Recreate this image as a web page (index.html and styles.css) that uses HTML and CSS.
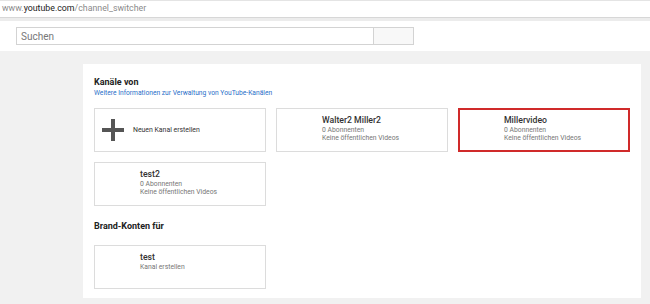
FILE: index.html
```html
<!DOCTYPE html>
<html lang="de">
<head>
<meta charset="utf-8">
<title>YouTube Kanäle</title>
<link rel="stylesheet" href="styles.css">
</head>
<body>
<div class="urlbar"><span class="dim">www.</span><span class="host">youtube.com</span><span class="dim">/channel_switcher</span></div>
<div class="strip"></div>
<header class="masthead">
  <div class="search">
    <input class="search-input" type="text" placeholder="Suchen">
    <button class="search-btn" type="button"></button>
  </div>
</header>
<main class="page">
  <section class="panel">
    <h2 class="heading">Kanäle von</h2>
    <a class="link" href="#">Weitere Informationen zur Verwaltung von YouTube-Kanälen</a>
    <div class="grid">
      <div class="tile tile-new">
        <svg class="plus" width="22" height="22" viewBox="0 0 22 22"><rect x="9" y="0" width="4" height="22" fill="#555"/><rect x="0" y="9" width="22" height="4" fill="#555"/></svg>
        <span class="new-label">Neuen Kanal erstellen</span>
      </div>
      <div class="tile">
        <div class="info">
          <div class="name">Walter2 Miller2</div>
          <div class="meta">0 Abonnenten</div>
          <div class="meta">Keine öffentlichen Videos</div>
        </div>
      </div>
      <div class="tile tile-active">
        <div class="info">
          <div class="name">Millervideo</div>
          <div class="meta">0 Abonnenten</div>
          <div class="meta">Keine öffentlichen Videos</div>
        </div>
      </div>
      <div class="tile">
        <div class="info">
          <div class="name">test2</div>
          <div class="meta">0 Abonnenten</div>
          <div class="meta">Keine öffentlichen Videos</div>
        </div>
      </div>
    </div>
    <h2 class="heading heading-brand">Brand-Konten für</h2>
    <div class="grid">
      <div class="tile">
        <div class="info">
          <div class="name">test</div>
          <div class="meta">Kanal erstellen</div>
        </div>
      </div>
    </div>
  </section>
</main>
</body>
</html>
```
FILE: styles.css
```css
* { box-sizing: border-box; }
html, body { margin: 0; padding: 0; }
body {
  width: 650px;
  height: 304px;
  overflow: hidden;
  background: #f1f1f1;
  font-family: Roboto, "Liberation Sans", Arial, sans-serif;
  color: #333;
}
.urlbar {
  height: 18px;
  background: #fff;
  border-top: 1px solid #e4e4e4;
  border-bottom: 1px solid #d7d7d7;
  font-size: 8.8px;
  line-height: 15px;
  padding-left: 2px;
  white-space: nowrap;
}
.urlbar .dim { color: #8a8a8a; }
.urlbar .host { color: #222; }
.strip {
  height: 3px;
  background: #ececec;
}
.masthead {
  height: 30px;
  background: #fff;
  padding: 6px 0 0 16px;
}
.search { display: flex; }
.search-input {
  width: 357px;
  height: 18px;
  margin: 0;
  border: 1px solid #d3d3d3;
  border-right: none;
  padding: 0 0 0 4px;
  font-family: Roboto, "Liberation Sans", Arial, sans-serif;
  font-size: 10px;
  color: #333;
  outline: none;
}
.search-input::placeholder { color: #777; }
.search-btn {
  width: 41px;
  height: 18px;
  margin: 0;
  padding: 0;
  border: 1px solid #d3d3d3;
  background: #f8f8f8;
}
.page {
  padding: 13px 0 0 83px;
}
.panel {
  width: 558px;
  height: 234px;
  background: #fff;
  padding: 13px 11px 0 11px;
}
.heading {
  margin: 0;
  font-size: 9px;
  line-height: 11px;
  font-weight: 700;
  color: #222;
}
.heading-brand { margin-top: 15px; }
.link {
  display: block;
  font-size: 6.7px;
  line-height: 10px;
  color: #2a6fc9;
  text-decoration: none;
}
.grid {
  display: grid;
  grid-template-columns: repeat(3, 172px);
  grid-auto-rows: 44px;
  gap: 10px;
  margin-top: 10px;
}
.heading-brand + .grid { margin-top: 13px; }
.tile {
  border: 1px solid #dcdcdc;
  background: #fff;
  padding: 6px 0 0 45px;
}
.tile-active {
  border: 2px solid #d02a2a;
  padding: 5px 0 0 44px;
}
.tile-new {
  display: flex;
  align-items: center;
  padding: 0 0 0 7px;
}
.plus { display: block; margin-right: 9px; }
.new-label {
  font-size: 6.9px;
  color: #333;
}
.name {
  font-size: 8.7px;
  line-height: 11px;
  font-weight: 500;
  color: #333;
}
.meta {
  font-size: 6.8px;
  line-height: 8px;
  color: #767676;
}
```
